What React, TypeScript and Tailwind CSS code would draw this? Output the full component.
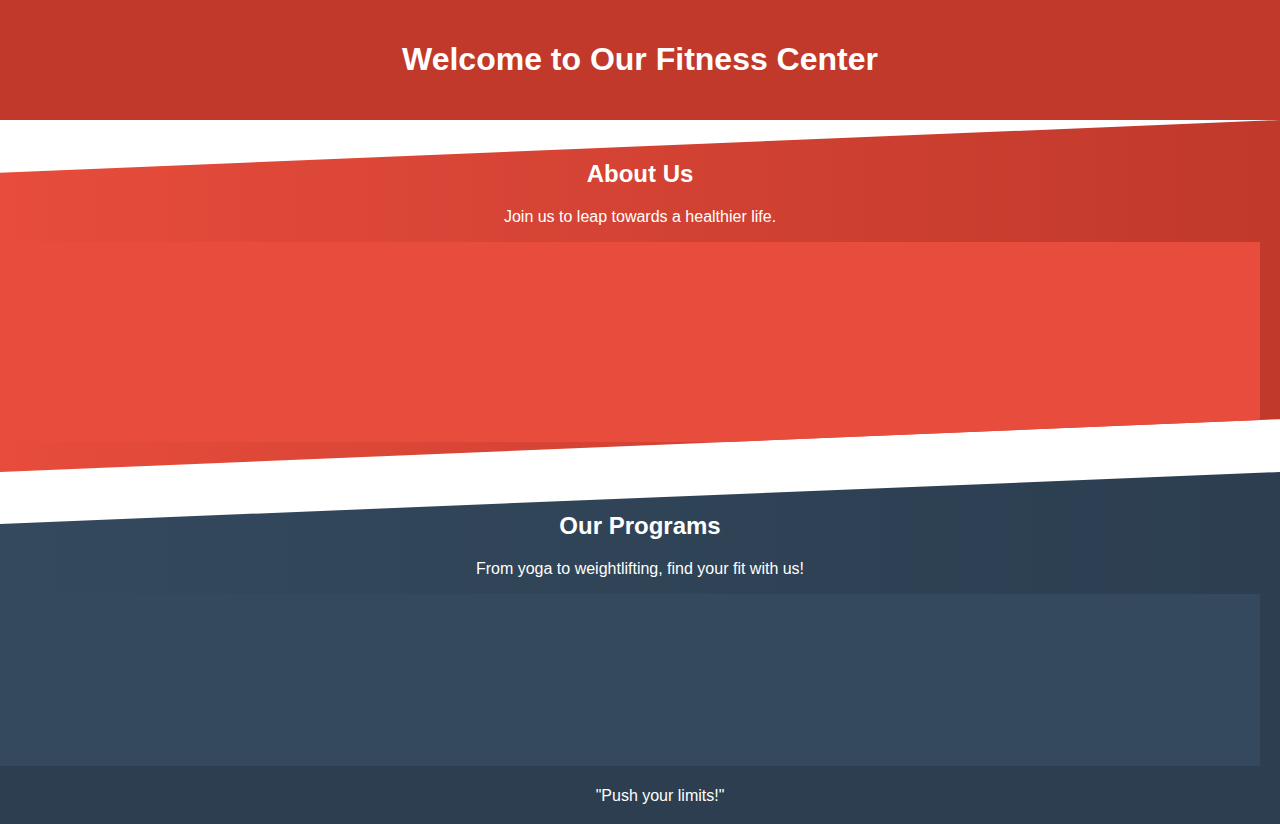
const sections = [
  {
    title: "About Us",
    text: "Join us to leap towards a healthier life.",
  },
  {
    title: "Our Programs",
    text: "From yoga to weightlifting, find your fit with us!",
  },
];

export default function App() {
  const [about, programs] = sections;

  return (
    <div className="min-h-[824px] bg-white font-['Liberation_Sans',Arial,sans-serif] text-white">
      <header className="flex h-[120px] items-center justify-center bg-[#c0392b] pb-[2px]">
        <h1 className="text-[32px] font-bold leading-[37px]">Welcome to Our Fitness Center</h1>
      </header>

      <section className="h-[352px] bg-linear-to-r from-[#e74c3c] to-[#c0392b] pt-10 text-center [clip-path:polygon(0_15%,100%_0,100%_85%,0_100%)]">
        <h2 className="text-2xl font-bold leading-7">{about.title}</h2>
        <p className="mt-5 text-base leading-[18px]">{about.text}</p>
        <div className="mr-5 mt-4 h-[200px] bg-[#e74c3c]" />
      </section>

      <section className="h-[294px] bg-linear-to-r from-[#34495e] to-[#2c3e50] pt-10 text-center [clip-path:polygon(0_52px,100%_0,100%_100%,0_100%)]">
        <h2 className="text-2xl font-bold leading-7">{programs.title}</h2>
        <p className="mt-5 text-base leading-[18px]">{programs.text}</p>
        <div className="mr-5 mt-4 h-[172px] bg-[#34495e]" />
      </section>

      <footer className="bg-[#2c3e50] pb-[19px] pl-10 pt-[21px] text-center text-base leading-[18px]">
        "Push your limits!"
      </footer>
    </div>
  );
}
